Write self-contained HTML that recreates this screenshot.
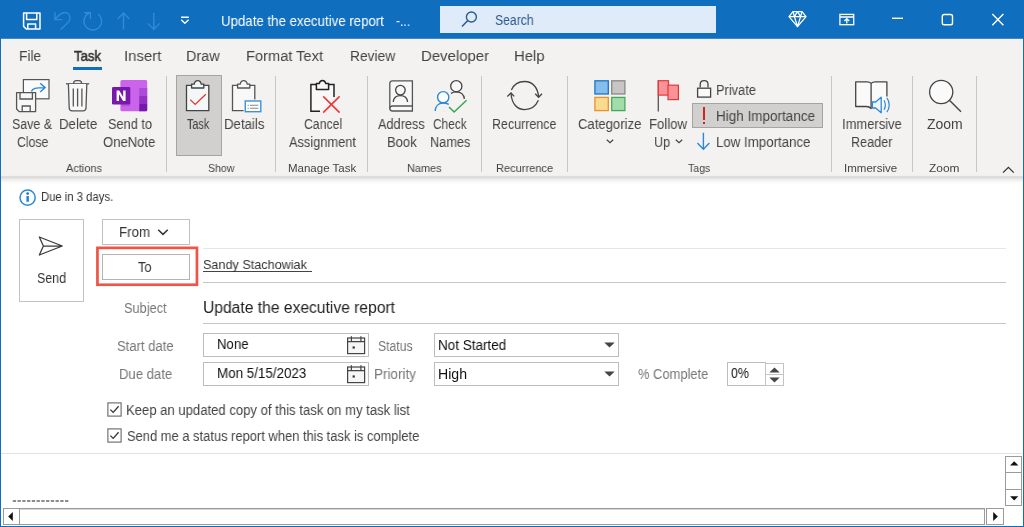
<!DOCTYPE html>
<html>
<head>
<meta charset="utf-8">
<title>Update the executive report - Task</title>
<style>
*{box-sizing:border-box;margin:0;padding:0}
html,body{width:1024px;height:527px;overflow:hidden;background:#fff}
body{font-family:"Liberation Sans",sans-serif;position:relative;color:#444}
.a{position:absolute}
.t{position:absolute;white-space:nowrap;line-height:20px;height:20px;transform-origin:0 0;will-change:transform}
svg{position:absolute;overflow:visible}
#titlebar{position:absolute;left:0;top:0;width:1024px;height:38px;background:#106ebe}
#chrome{position:absolute;left:0;top:38px;width:1024px;height:138px;background:#f3f2f1}
#ribshadow{position:absolute;left:0;top:175px;width:1024px;height:10px;background:linear-gradient(#f3f2f1 0,#f1f0ef 0.5px,#dfdddb 1.3px,#dddbd9 2.4px,#e6e5e4 3.4px,#eeeeee 4.8px,#f6f6f6 6.4px,#fcfcfc 8px,#ffffff 9.4px)}
.sep{position:absolute;top:76px;width:1px;height:96px;background:#c8c6c4}
.box{position:absolute;border:1px solid #bdbdbd;background:#fff}
.hl{position:absolute;height:1px;left:203px;width:803px}
</style>
</head>
<body>
<div id="titlebar"></div>
<div id="chrome"></div>
<div class="a" style="left:0;top:38px;width:1024px;height:1px;background:#3d88c8"></div>
<div id="ribshadow"></div>
<!-- search box -->
<div class="a" style="left:440px;top:6px;width:276px;height:27px;background:#dfebf8"></div>
<!-- active tab underline -->
<div class="a" style="left:73px;top:66.8px;width:29px;height:3px;background:#106ebe"></div>
<!-- ribbon separators -->
<div class="sep" style="left:166px"></div>
<div class="sep" style="left:275px"></div>
<div class="sep" style="left:367px"></div>
<div class="sep" style="left:481px"></div>
<div class="sep" style="left:567px"></div>
<div class="sep" style="left:831px"></div>
<div class="sep" style="left:912px"></div>
<div class="sep" style="left:976px"></div>
<!-- selected ribbon buttons -->
<div class="a" style="left:176px;top:75px;width:46px;height:81px;background:#d2d0ce;border:1px solid #a6a4a2"></div>
<div class="a" style="left:692px;top:103px;width:131px;height:25px;background:#d2d0ce;border:1px solid #a6a4a2"></div>
<!-- TITLE BAR ICONS -->
<svg style="left:0;top:0" width="1024" height="38" viewBox="0 0 1024 38">
<g fill="none" stroke="#fff" stroke-width="1.5" stroke-linejoin="round">
<!-- save -->
<path d="M23.6 12.9 H40 V29 H26.2 L23.6 26.4 Z"/>
<path d="M26.6 12.9 V19.4 H36.8 V12.9"/>
<path d="M27.8 29 V24 H35.6 V29"/>
</g>
<g fill="none" stroke="#348ad8" stroke-width="1.35">
<!-- undo -->
<path d="M55 12.2 V19.6 H62.2 M55.2 19.4 C58 15.6 61.4 12.5 65 12.5 C68 12.5 70 15 70 18 C70 20 69.2 21.4 68 22.5 L60.6 29.4"/>
<!-- redo -->
<path d="M84.2 12.7 H90.4 V18.8 M90.4 12.7 A8.8 8.8 0 1 0 98.1 14.2"/>
<!-- up / down -->
<path d="M123.5 13 V29.6 M117.6 19 L123.5 13 L129.4 19"/>
<path d="M153.8 29.4 V12.8 M147.9 23.4 L153.8 29.4 L159.7 23.4"/>
</g>
<!-- qat dropdown -->
<path d="M181 17.3 H188.8 M181.2 19.8 L184.9 23.2 L188.6 19.8" fill="none" stroke="#fff" stroke-width="1.4"/>
<!-- search icon -->
<circle cx="471.4" cy="17" r="5" fill="none" stroke="#2a5a94" stroke-width="1.4"/><path d="M467.8 20.6 L462 26.6" stroke="#2a5a94" stroke-width="1.5" fill="none"/>
<!-- diamond -->
<g fill="none" stroke="#fff" stroke-width="1.3" stroke-linejoin="round"><path d="M793 11.6 H802 L806 16.6 L797.5 26.6 L789 16.6 Z"/><path d="M789 16.6 H806 M794.4 16.6 L797.5 26.6 L800.6 16.6 M793 11.6 L794.4 16.6 L797.5 11.6 L800.6 16.6 L802 11.6"/></g>
<!-- ribbon display options -->
<g fill="none" stroke="#fff" stroke-width="1.3"><rect x="839.9" y="14.4" width="13.8" height="10.3"/><path d="M839.9 17 H853.7 M846.8 23.6 V18.8 M844.4 21 L846.8 18.6 L849.2 21"/></g>
<!-- minimize / maximize / close -->
<path d="M892 18.3 H903" stroke="#fff" stroke-width="1.4"/>
<rect x="942.3" y="14.5" width="10.2" height="10.2" rx="1.8" fill="none" stroke="#fff" stroke-width="1.4"/>
<path d="M992.3 14.1 L1003.4 25.2 M1003.4 14.1 L992.3 25.2" stroke="#fff" stroke-width="1.4" fill="none"/>
</svg>

<!-- RIBBON ICONS -->
<!-- Save & Close -->
<svg style="left:15px;top:78px" width="36" height="36" viewBox="0 0 36 36"><rect x="8.4" y="1.6" width="25.6" height="19.2" fill="#fafafa" stroke="#555" stroke-width="1.2"/><path d="M16.4 13.6 C17.6 10.4 20.4 9.6 30 9.6 M25.2 5.2 L30.2 9.6 L25.2 14" fill="none" stroke="#2b88d8" stroke-width="1.4"/><path d="M1.6 14.6 H20.6 V33.6 H4.2 L1.6 31 Z" fill="#f8f8f8" stroke="#555" stroke-width="1.3" stroke-linejoin="round"/><path d="M5 14.8 V21 H17.4 V14.8 M7.2 33.4 V28 H15.2 V33.4" fill="none" stroke="#555" stroke-width="1.3"/></svg>
<!-- Delete -->
<svg style="left:65px;top:79px" width="26" height="34" viewBox="0 0 26 34"><g fill="none" stroke="#555" stroke-width="1.3"><path d="M1 4.8 H24.2"/><path d="M8.6 4.6 C8.6 2.6 9.8 1.6 11.2 1.6 H14 C15.4 1.6 16.6 2.6 16.6 4.6"/><path d="M3.4 5 L4.2 29 C4.3 30.8 5.2 31.8 7 31.8 H18.2 C20 31.8 20.9 30.8 21 29 L21.8 5" fill="#f8f8f8"/><path d="M8.3 9.4 V27.4 M12.6 9.4 V27.4 M16.9 9.4 V27.4"/></g></svg>
<!-- OneNote -->
<svg style="left:111px;top:79px" width="38" height="34" viewBox="0 0 38 34"><rect x="9.4" y="1.1" width="26.8" height="31.2" rx="1.6" fill="#ca64ea"/><rect x="28.2" y="9" width="8" height="7.8" fill="#ae4bd5"/><rect x="28.2" y="16.8" width="8" height="8" fill="#9332bf"/><path d="M28.2 24.8 H36.2 V30.7 C36.2 31.6 35.5 32.3 34.6 32.3 H28.2 Z" fill="#7719aa"/><rect x="11" y="25.5" width="8" height="1.6" fill="#a94bd0" opacity="0.7"/><rect x="1" y="8.1" width="18.3" height="17.4" rx="1.3" fill="#7719aa"/><path d="M5.6 22 V11.4 H8.2 L12.2 18 V11.4 H14.6 V22 H12.1 L8 15.2 V22 Z" fill="#fff"/></svg>
<!-- Task clipboard -->
<svg style="left:185.3px;top:79.2px" width="26" height="34" viewBox="0 0 26 34"><path d="M1.5 6.4 H23.8 V31.6 H1.5 Z" fill="#f3f7f8" stroke="#444" stroke-width="1.3"/><path d="M6.6 9 V5.2 H9.2 C9.6 2.8 11 1.6 12.7 1.6 C14.4 1.6 15.8 2.8 16.2 5.2 H18.8 V9 Z" fill="#f3f7f8" stroke="#444" stroke-width="1.3" stroke-linejoin="round"/><path d="M5.2 20.6 L10.2 25.4 L20.8 15.2" fill="none" stroke="#d8392f" stroke-width="1.3"/></svg>
<!-- Details clipboard -->
<svg style="left:231.2px;top:79.2px" width="32" height="35" viewBox="0 0 32 35"><path d="M13.6 31.6 H1.5 V6.4 H23.8 V21" fill="#f8f8f8" stroke="#555" stroke-width="1.3"/><path d="M6.6 9 V5.2 H9.2 C9.6 2.8 11 1.6 12.7 1.6 C14.4 1.6 15.8 2.8 16.2 5.2 H18.8 V9 Z" fill="#f8f8f8" stroke="#555" stroke-width="1.3" stroke-linejoin="round"/><rect x="12.6" y="20.4" width="18.6" height="13.8" fill="#f3f2f1"/><rect x="14.3" y="22" width="15.5" height="10.7" fill="#fff" stroke="#3a93dc" stroke-width="1.4"/><path d="M19 26.2 H27.4 M19 29.3 H27.4" stroke="#8a8886" stroke-width="1.1"/><path d="M16.6 26.2 H17.8 M16.6 29.3 H17.8" stroke="#8a8886" stroke-width="1.1"/></svg>
<!-- Cancel assignment -->
<svg style="left:309px;top:79px" width="32" height="35" viewBox="0 0 32 35"><path d="M11 32.2 H1.9 V5.4 H25 V18" fill="#f8f8f8" stroke="#222" stroke-width="1.5"/><path d="M7.4 10.6 V4.6 H10.2 C10.6 2.4 12 1.4 13.5 1.4 C15 1.4 16.4 2.4 16.8 4.6 H19.6 V10.6 Z" fill="#f8f8f8" stroke="#222" stroke-width="1.5" stroke-linejoin="round"/><path d="M14.2 17.4 L30.6 33.6 M30.6 17.4 L14.2 33.6" stroke="#e8363a" stroke-width="1.5" fill="none"/></svg>
<!-- Address book -->
<svg style="left:388px;top:79px" width="26" height="34" viewBox="0 0 26 34"><g fill="none" stroke="#555" stroke-width="1.3"><path d="M24.4 1.8 H4.6 C2.9 1.8 1.8 2.9 1.8 4.6 V29.2 C1.8 30.9 2.9 32 4.6 32 H24.4 Z" fill="#f8f8f8"/><path d="M24.4 27 H4.2 C2.8 27 1.8 28 1.8 29.4"/></g><g fill="none" stroke="#444" stroke-width="1.3"><circle cx="12.4" cy="11.1" r="4.8"/><path d="M5.2 23 C5.6 18.6 8.6 16.6 12.4 16.6 C16.2 16.6 19.2 18.6 19.6 23"/></g></svg>
<!-- Check names -->
<svg style="left:434px;top:79px" width="34" height="35" viewBox="0 0 34 35"><g fill="#f8f8f8" stroke="#444" stroke-width="1.3"><circle cx="22.3" cy="7.2" r="5.6"/><path d="M17 14.4 C19 13.2 20.6 12.9 22.3 12.9 C26.4 12.9 29.8 15.4 30.4 19.9" fill="none"/></g><g stroke="#2b88d8" stroke-width="1.4"><circle cx="9.2" cy="18.2" r="5.6" fill="#fff"/><path d="M1.2 32 C1.4 27.2 4.6 24 9.2 24 C11.4 24 13.2 24.6 14.8 25.4" fill="none"/></g><path d="M15 28 L20.1 33 L32.6 21.3" fill="none" stroke="#37a552" stroke-width="1.5"/></svg>
<!-- Recurrence -->
<svg style="left:506px;top:80px" width="38" height="31" viewBox="0 0 38 31"><g fill="none" stroke="#444" stroke-width="1.3"><path d="M5.4 10 C8.2 3.6 13.4 1.5 18.6 1.5 C26.6 1.5 32 7.6 32.6 17.2"/><path d="M29.2 13.7 L32.6 17.2 L36 13.7"/><path d="M32.4 20.3 C29.6 26.6 24.4 29.6 18.6 29.6 C10.8 29.6 5.6 23.6 5 13"/><path d="M1.3 16.4 L5 13 L8.2 16.4"/></g></svg>
<!-- Categorize -->
<svg style="left:593px;top:79px" width="34" height="34" viewBox="0 0 34 34"><rect x="1.9" y="1.8" width="13.4" height="13.2" fill="#83beec" stroke="#1e74c4" stroke-width="1.3"/><rect x="18.7" y="1.8" width="13.2" height="13.2" fill="#c8c6c4" stroke="#8a8886" stroke-width="1.3"/><rect x="1.9" y="18.4" width="13.4" height="13.2" fill="#f8db8f" stroke="#e8912d" stroke-width="1.3"/><rect x="18.7" y="18.4" width="13.2" height="13.2" fill="#a1dda9" stroke="#4ca55c" stroke-width="1.3"/></svg>
<!-- Follow up flag -->
<svg style="left:656px;top:79px" width="24" height="34" viewBox="0 0 24 34"><path d="M2.3 1.2 V32.4" stroke="#555" stroke-width="1.3"/><rect x="2.3" y="1.7" width="10.2" height="14.4" fill="#fc9297" stroke="#de3a3a" stroke-width="1.2"/><rect x="12" y="6.2" width="10.4" height="14.4" fill="#fc9297" stroke="#de3a3a" stroke-width="1.2"/></svg>
<!-- Categorize / Follow up chevrons -->
<svg style="left:605.5px;top:139px" width="8" height="5" viewBox="0 0 8 5"><path d="M0.8 0.8 L4 3.8 L7.2 0.8" fill="none" stroke="#444" stroke-width="1.2"/></svg>
<svg style="left:674.5px;top:139px" width="8" height="5" viewBox="0 0 8 5"><path d="M0.8 0.8 L4 3.8 L7.2 0.8" fill="none" stroke="#444" stroke-width="1.2"/></svg>
<!-- Lock -->
<svg style="left:696px;top:79px" width="16" height="20" viewBox="0 0 16 20"><path d="M4.2 8.6 V5.4 C4.2 3 5.8 1.6 8.1 1.6 C10.4 1.6 12 3 12 5.4 V8.6" fill="none" stroke="#444" stroke-width="1.3"/><rect x="1.6" y="9.2" width="13" height="8.9" fill="#fafafa" stroke="#444" stroke-width="1.3"/></svg>
<!-- High importance ! -->
<div class="a" style="left:703.2px;top:106.7px;width:1.8px;height:13px;background:#c8281e"></div>
<div class="a" style="left:703.2px;top:121.9px;width:1.8px;height:1.9px;background:#c8281e"></div>
<!-- Low importance arrow -->
<svg style="left:696px;top:132px" width="15" height="19" viewBox="0 0 15 19"><path d="M7.4 0.8 V17 M1.4 11 L7.4 17.2 L13.4 11" fill="none" stroke="#2b88d8" stroke-width="1.4"/></svg>
<!-- Immersive reader -->
<svg style="left:0;top:0" width="1024" height="180" viewBox="0 0 1024 180"><path d="M871.1 83.4 C872.2 82.2 873.6 81.8 875.2 81.8 H886.9 V106 H871.1 Z" fill="#fafafa"/><path d="M871.1 83.4 C870 82.2 868.6 81.8 867 81.8 H855.7 V106.5 H866.4 C868.4 106.5 870 107.2 871.1 108.6 Z" fill="#fafafa" stroke="#444" stroke-width="1.3" stroke-linejoin="round"/><path d="M871.1 83.4 C872.2 82.2 873.6 81.8 875.2 81.8 H886.9 V96.4" fill="none" stroke="#444" stroke-width="1.3" stroke-linejoin="round"/><path d="M872.4 102 H875.6 L881.2 97.2 V112.8 L875.6 108 H872.4 Z" fill="#f2f8fd" stroke="#2b88d8" stroke-width="1.3" stroke-linejoin="round"/><path d="M884 100.4 C885.8 102.8 885.8 107.2 884 109.6 M886.8 97.8 C890 101.6 890 108.4 886.8 112.2" fill="none" stroke="#2b88d8" stroke-width="1.2"/></svg>
<!-- Zoom magnifier -->
<svg style="left:928px;top:79px" width="36" height="36" viewBox="0 0 36 36"><circle cx="13.2" cy="13" r="11.6" fill="#fafafa" stroke="#444" stroke-width="1.3"/><path d="M21.4 21.2 L33 32.8" stroke="#444" stroke-width="1.4" fill="none"/></svg>
<!-- collapse ribbon chevron -->
<svg style="left:1002px;top:166px" width="13" height="8" viewBox="0 0 13 8"><path d="M1 6.6 L6.4 1.4 L11.8 6.6" fill="none" stroke="#333" stroke-width="1.3"/></svg>
<!-- FORM -->
<!-- info icon -->
<svg style="left:19px;top:188.5px" width="17" height="17" viewBox="0 0 17 17"><circle cx="8.6" cy="8.6" r="7.6" fill="#fff" stroke="#2b8ad6" stroke-width="1.5"/><rect x="7.45" y="7" width="2.4" height="5.8" fill="#1f7fd0"/><circle cx="8.65" cy="4.6" r="1.45" fill="#1f7fd0"/></svg>
<!-- send button -->
<div class="box" style="left:19px;top:219px;width:65px;height:83px;border-color:#c2c2c2"></div>
<svg style="left:36px;top:234px" width="30" height="24" viewBox="0 0 30 24"><path d="M3.3 3 L26.3 12 L3.3 21 L7.4 12 Z M7.4 12 L26.3 12" fill="#fdfdfd" stroke="#3a3a3a" stroke-width="1.25" stroke-linejoin="round"/></svg>
<!-- from / to buttons -->
<div class="box" style="left:102px;top:219px;width:88px;height:26px;border-color:#c0c0c0"></div>
<svg style="left:157px;top:228px" width="12" height="8" viewBox="0 0 12 8"><path d="M1.2 1.8 L6 6.4 L10.8 1.8" fill="none" stroke="#333" stroke-width="1.5"/></svg>
<svg style="left:0;top:0" width="300" height="300" viewBox="0 0 300 300"><rect x="97.45" y="247.85" width="99.5" height="36.9" fill="none" stroke="#ef5446" stroke-width="2.7"/></svg>
<div class="box" style="left:102px;top:254px;width:88px;height:26px;border-color:#b4b4b4"></div>
<!-- name underline -->
<div class="a" style="left:203px;top:270.6px;width:109px;height:1.1px;background:#444"></div>
<!-- field lines -->
<div class="hl" style="top:248px;background:#e6e6e6"></div>
<div class="hl" style="top:282px;background:#c6c6c6"></div>
<div class="hl" style="top:322.5px;background:#c8c6c4"></div>
<!-- date boxes -->
<div class="box" style="left:203px;top:333px;width:166px;height:24px"></div>
<div class="box" style="left:203px;top:362px;width:166px;height:24px"></div>
<!-- calendar icons -->
<svg style="left:346px;top:335px" width="20" height="20" viewBox="0 0 20 20"><g fill="none" stroke="#444" stroke-width="1.2"><rect x="1.6" y="3" width="17" height="15.6" fill="#f6f6f6"/><path d="M1.6 6.6 H18.6 M5.4 1.2 V6.4 M14.9 1.2 V6.4"/></g><rect x="6.6" y="11.4" width="2.2" height="2.2" fill="#333"/></svg>
<svg style="left:346px;top:364px" width="20" height="20" viewBox="0 0 20 20"><g fill="none" stroke="#444" stroke-width="1.2"><rect x="1.6" y="3" width="17" height="15.6" fill="#f6f6f6"/><path d="M1.6 6.6 H18.6 M5.4 1.2 V6.4 M14.9 1.2 V6.4"/></g><rect x="6.6" y="11.4" width="2.2" height="2.2" fill="#333"/></svg>
<!-- selects -->
<div class="box" style="left:434px;top:333px;width:185px;height:24px"></div>
<div class="box" style="left:434px;top:362px;width:185px;height:24px"></div>
<svg style="left:604px;top:342px" width="11" height="6" viewBox="0 0 11 6"><path d="M0.3 0.4 H10.7 L5.5 5.6 Z" fill="#444"/></svg>
<svg style="left:604px;top:371px" width="11" height="6" viewBox="0 0 11 6"><path d="M0.3 0.4 H10.7 L5.5 5.6 Z" fill="#444"/></svg>
<!-- % complete -->
<div class="box" style="left:727px;top:362px;width:39px;height:24px"></div>
<div class="box" style="left:765px;top:363px;width:19px;height:22.5px;border-color:#c4c4c4"></div>
<div class="a" style="left:765px;top:373.8px;width:19px;height:1px;background:#c4c4c4"></div>
<svg style="left:769px;top:366.6px" width="11" height="6" viewBox="0 0 11 6"><path d="M0.3 5.6 H10.7 L5.5 0.4 Z" fill="#444"/></svg>
<svg style="left:769px;top:376.8px" width="11" height="6" viewBox="0 0 11 6"><path d="M0.3 0.4 H10.7 L5.5 5.6 Z" fill="#444"/></svg>
<!-- checkboxes -->
<svg style="left:106.5px;top:402px" width="15" height="15" viewBox="0 0 15 15"><rect x="0.9" y="0.9" width="13.2" height="13.2" fill="#fff" stroke="#666" stroke-width="1.1"/><path d="M3.4 7.6 L6.2 10.4 L11.6 4.2" fill="none" stroke="#333" stroke-width="1.3"/></svg>
<svg style="left:106.5px;top:428px" width="15" height="15" viewBox="0 0 15 15"><rect x="0.9" y="0.9" width="13.2" height="13.2" fill="#fff" stroke="#666" stroke-width="1.1"/><path d="M3.4 7.6 L6.2 10.4 L11.6 4.2" fill="none" stroke="#333" stroke-width="1.3"/></svg>
<!-- body divider -->
<div class="a" style="left:1px;top:453px;width:1021px;height:1px;background:#e1e1e1"></div>
<!-- dashes -->
<svg style="left:0;top:495px" width="100" height="10" viewBox="0 0 100 10"><path d="M12.8 6 H68.4" stroke="#8c8c8c" stroke-width="1.8" stroke-dasharray="3.3 1.45" fill="none"/></svg>
<!-- vertical scrollbar -->
<div class="box" style="left:1005px;top:456px;width:17px;height:17px;border-color:#9a9a9a"></div>
<div class="box" style="left:1005px;top:472px;width:17px;height:17.5px;border-color:#9a9a9a"></div>
<div class="box" style="left:1005px;top:488.5px;width:17px;height:17.5px;border-color:#9a9a9a"></div>
<svg style="left:1009.8px;top:461.2px" width="8.4" height="4.6" viewBox="0 0 9 5"><path d="M0 4.8 H9 L4.5 0.2 Z" fill="#111"/></svg>
<svg style="left:1009.8px;top:496px" width="8.4" height="4.6" viewBox="0 0 9 5"><path d="M0 0.2 H9 L4.5 4.8 Z" fill="#111"/></svg>
<!-- horizontal scrollbar -->
<div class="box" style="left:3px;top:508px;width:982px;height:17px;border-color:#9a9a9a;box-shadow:inset 0 1px 0 #d8d8d8"></div>
<div class="box" style="left:3px;top:508px;width:17px;height:17px;border-color:#9a9a9a"></div>
<div class="box" style="left:986px;top:508px;width:17.5px;height:17px;border-color:#9a9a9a"></div>
<svg style="left:7.6px;top:512.4px" width="5" height="9" viewBox="0 0 5 9"><path d="M4.8 0 V9 L0.2 4.5 Z" fill="#111"/></svg>
<svg style="left:993px;top:512.4px" width="5" height="9" viewBox="0 0 5 9"><path d="M0.2 0 V9 L4.8 4.5 Z" fill="#111"/></svg>

<!-- TEXT -->
<div class="t" style="left:220.84px;top:11.00px;font-size:14.5px;color:#ffffff;transform:scaleX(0.9147);">Update the executive report</div>
<div class="t" style="left:395.75px;top:11.00px;font-size:14.5px;color:#ffffff;transform:scaleX(0.8341);">-...</div>
<div class="t" style="left:494.50px;top:9.90px;font-size:14px;color:#2a5a94;transform:scaleX(0.8721);">Search</div>
<div class="t" style="left:19.11px;top:45.90px;font-size:15.5px;color:#444;transform:scaleX(0.8885);">File</div>
<div class="t" style="left:73.50px;top:45.90px;font-size:15.5px;color:#333;transform:scaleX(0.8499);-webkit-text-stroke:0.55px #333;">Task</div>
<div class="t" style="left:124.04px;top:45.90px;font-size:15.5px;color:#444;transform:scaleX(0.9621);">Insert</div>
<div class="t" style="left:186.07px;top:45.90px;font-size:15.5px;color:#444;transform:scaleX(0.9312);">Draw</div>
<div class="t" style="left:245.81px;top:45.90px;font-size:15.5px;color:#444;transform:scaleX(0.9446);">Format Text</div>
<div class="t" style="left:349.61px;top:45.90px;font-size:15.5px;color:#444;transform:scaleX(0.8888);">Review</div>
<div class="t" style="left:420.54px;top:45.90px;font-size:15.5px;color:#444;transform:scaleX(0.9642);">Developer</div>
<div class="t" style="left:513.54px;top:45.90px;font-size:15.5px;color:#444;transform:scaleX(0.9584);">Help</div>
<div class="t" style="left:11.75px;top:114.25px;font-size:14px;color:#444444;transform:scaleX(0.8897);">Save &amp;</div>
<div class="t" style="left:16.75px;top:132.00px;font-size:14px;color:#444444;transform:scaleX(0.8748);">Close</div>
<div class="t" style="left:58.56px;top:114.25px;font-size:14px;color:#444444;transform:scaleX(0.9450);">Delete</div>
<div class="t" style="left:107.50px;top:114.25px;font-size:14px;color:#444444;transform:scaleX(0.9128);">Send to</div>
<div class="t" style="left:103.00px;top:132.00px;font-size:14px;color:#444444;transform:scaleX(0.9334);">OneNote</div>
<div class="t" style="left:187.00px;top:114.25px;font-size:14px;color:#444444;transform:scaleX(0.7722);">Task</div>
<div class="t" style="left:224.05px;top:114.25px;font-size:14px;color:#444444;transform:scaleX(0.9451);">Details</div>
<div class="t" style="left:303.75px;top:114.25px;font-size:14px;color:#444444;transform:scaleX(0.8742);">Cancel</div>
<div class="t" style="left:288.75px;top:132.00px;font-size:14px;color:#444444;transform:scaleX(0.9146);">Assignment</div>
<div class="t" style="left:377.80px;top:114.25px;font-size:14px;color:#444444;transform:scaleX(0.9112);">Address</div>
<div class="t" style="left:386.97px;top:132.00px;font-size:14px;color:#444444;transform:scaleX(0.9307);">Book</div>
<div class="t" style="left:432.50px;top:114.25px;font-size:14px;color:#444444;transform:scaleX(0.8480);">Check</div>
<div class="t" style="left:429.59px;top:132.00px;font-size:14px;color:#444444;transform:scaleX(0.9113);">Names</div>
<div class="t" style="left:491.61px;top:114.25px;font-size:14px;color:#444444;transform:scaleX(0.8906);">Recurrence</div>
<div class="t" style="left:578.25px;top:114.25px;font-size:14px;color:#444444;transform:scaleX(0.9357);">Categorize</div>
<div class="t" style="left:649.06px;top:114.25px;font-size:14px;color:#444444;transform:scaleX(0.9419);">Follow</div>
<div class="t" style="left:653.59px;top:132.00px;font-size:14px;color:#444444;transform:scaleX(0.9059);">Up</div>
<div class="t" style="left:715.58px;top:79.50px;font-size:14px;color:#444444;transform:scaleX(0.9174);">Private</div>
<div class="t" style="left:715.54px;top:105.75px;font-size:14px;color:#444444;transform:scaleX(0.9639);">High Importance</div>
<div class="t" style="left:715.55px;top:132.00px;font-size:14px;color:#444444;transform:scaleX(0.9487);">Low Importance</div>
<div class="t" style="left:841.57px;top:114.25px;font-size:14px;color:#444444;transform:scaleX(0.9252);">Immersive</div>
<div class="t" style="left:851.10px;top:132.00px;font-size:14px;color:#444444;transform:scaleX(0.9005);">Reader</div>
<div class="t" style="left:927.40px;top:114.25px;font-size:14px;color:#444444;transform:scaleX(0.9965);">Zoom</div>
<div class="t" style="left:65.50px;top:158.00px;font-size:11.5px;color:#444444;transform:scaleX(0.9549);">Actions</div>
<div class="t" style="left:207.50px;top:158.00px;font-size:11.5px;color:#444444;transform:scaleX(0.9164);">Show</div>
<div class="t" style="left:287.50px;top:158.00px;font-size:11.5px;color:#444444;transform:scaleX(0.9942);">Manage Task</div>
<div class="t" style="left:406.75px;top:158.00px;font-size:11.5px;color:#444444;transform:scaleX(0.9475);">Names</div>
<div class="t" style="left:495.75px;top:158.00px;font-size:11.5px;color:#444444;transform:scaleX(0.9611);">Recurrence</div>
<div class="t" style="left:688.00px;top:158.00px;font-size:11.5px;color:#444444;transform:scaleX(0.9168);">Tags</div>
<div class="t" style="left:844.25px;top:158.00px;font-size:11.5px;color:#444444;transform:scaleX(1.0022);">Immersive</div>
<div class="t" style="left:928.90px;top:158.00px;font-size:11.5px;color:#444444;transform:scaleX(1.0341);">Zoom</div>
<div class="t" style="left:40.75px;top:187.25px;font-size:12px;color:#333;transform:scaleX(0.9394);">Due in 3 days.</div>
<div class="t" style="left:37.20px;top:267.75px;font-size:14px;color:#333;transform:scaleX(0.8900);">Send</div>
<div class="t" style="left:119.05px;top:222.00px;font-size:14px;color:#333;transform:scaleX(0.9516);">From</div>
<div class="t" style="left:138.25px;top:257.00px;font-size:14px;color:#333;transform:scaleX(0.9167);">To</div>
<div class="t" style="left:203.25px;top:255.00px;font-size:13.3px;color:#333;transform:scaleX(0.9499);">Sandy Stachowiak</div>
<div class="t" style="left:124.25px;top:298.25px;font-size:14px;color:#767676;transform:scaleX(0.9133);">Subject</div>
<div class="t" style="left:202.77px;top:298.25px;font-size:16px;color:#222222;transform:scaleX(0.9767);">Update the executive report</div>
<div class="t" style="left:117.00px;top:335.50px;font-size:14px;color:#767676;transform:scaleX(0.9316);">Start date</div>
<div class="t" style="left:118.56px;top:364.25px;font-size:14px;color:#767676;transform:scaleX(0.9369);">Due date</div>
<div class="t" style="left:216.66px;top:334.00px;font-size:14px;color:#111;transform:scaleX(0.9424);">None</div>
<div class="t" style="left:216.64px;top:363.00px;font-size:14px;color:#111;transform:scaleX(0.9571);">Mon 5/15/2023</div>
<div class="t" style="left:377.50px;top:335.50px;font-size:14px;color:#767676;transform:scaleX(0.8692);">Status</div>
<div class="t" style="left:373.54px;top:364.25px;font-size:14px;color:#767676;transform:scaleX(0.9634);">Priority</div>
<div class="t" style="left:437.64px;top:335.00px;font-size:14px;color:#111;transform:scaleX(0.9634);">Not Started</div>
<div class="t" style="left:437.59px;top:364.00px;font-size:14px;color:#111;transform:scaleX(1.0072);">High</div>
<div class="t" style="left:637.50px;top:364.25px;font-size:14px;color:#767676;transform:scaleX(0.9219);">% Complete</div>
<div class="t" style="left:730.50px;top:363.00px;font-size:14px;color:#111;transform:scaleX(0.8845);">0%</div>
<div class="t" style="left:126.06px;top:400.00px;font-size:14px;color:#444;transform:scaleX(0.9352);">Keep an updated copy of this task on my task list</div>
<div class="t" style="left:127.00px;top:425.75px;font-size:14px;color:#444;transform:scaleX(0.9229);">Send me a status report when this task is complete</div>
<!-- window borders -->
<div class="a" style="left:0;top:38px;width:1px;height:489px;background:#106ebe"></div>
<div class="a" style="left:1022.5px;top:38px;width:1.5px;height:489px;background:#106ebe"></div>
<div class="a" style="left:0;top:525.5px;width:1024px;height:1.5px;background:#106ebe"></div>
</body>
</html>
